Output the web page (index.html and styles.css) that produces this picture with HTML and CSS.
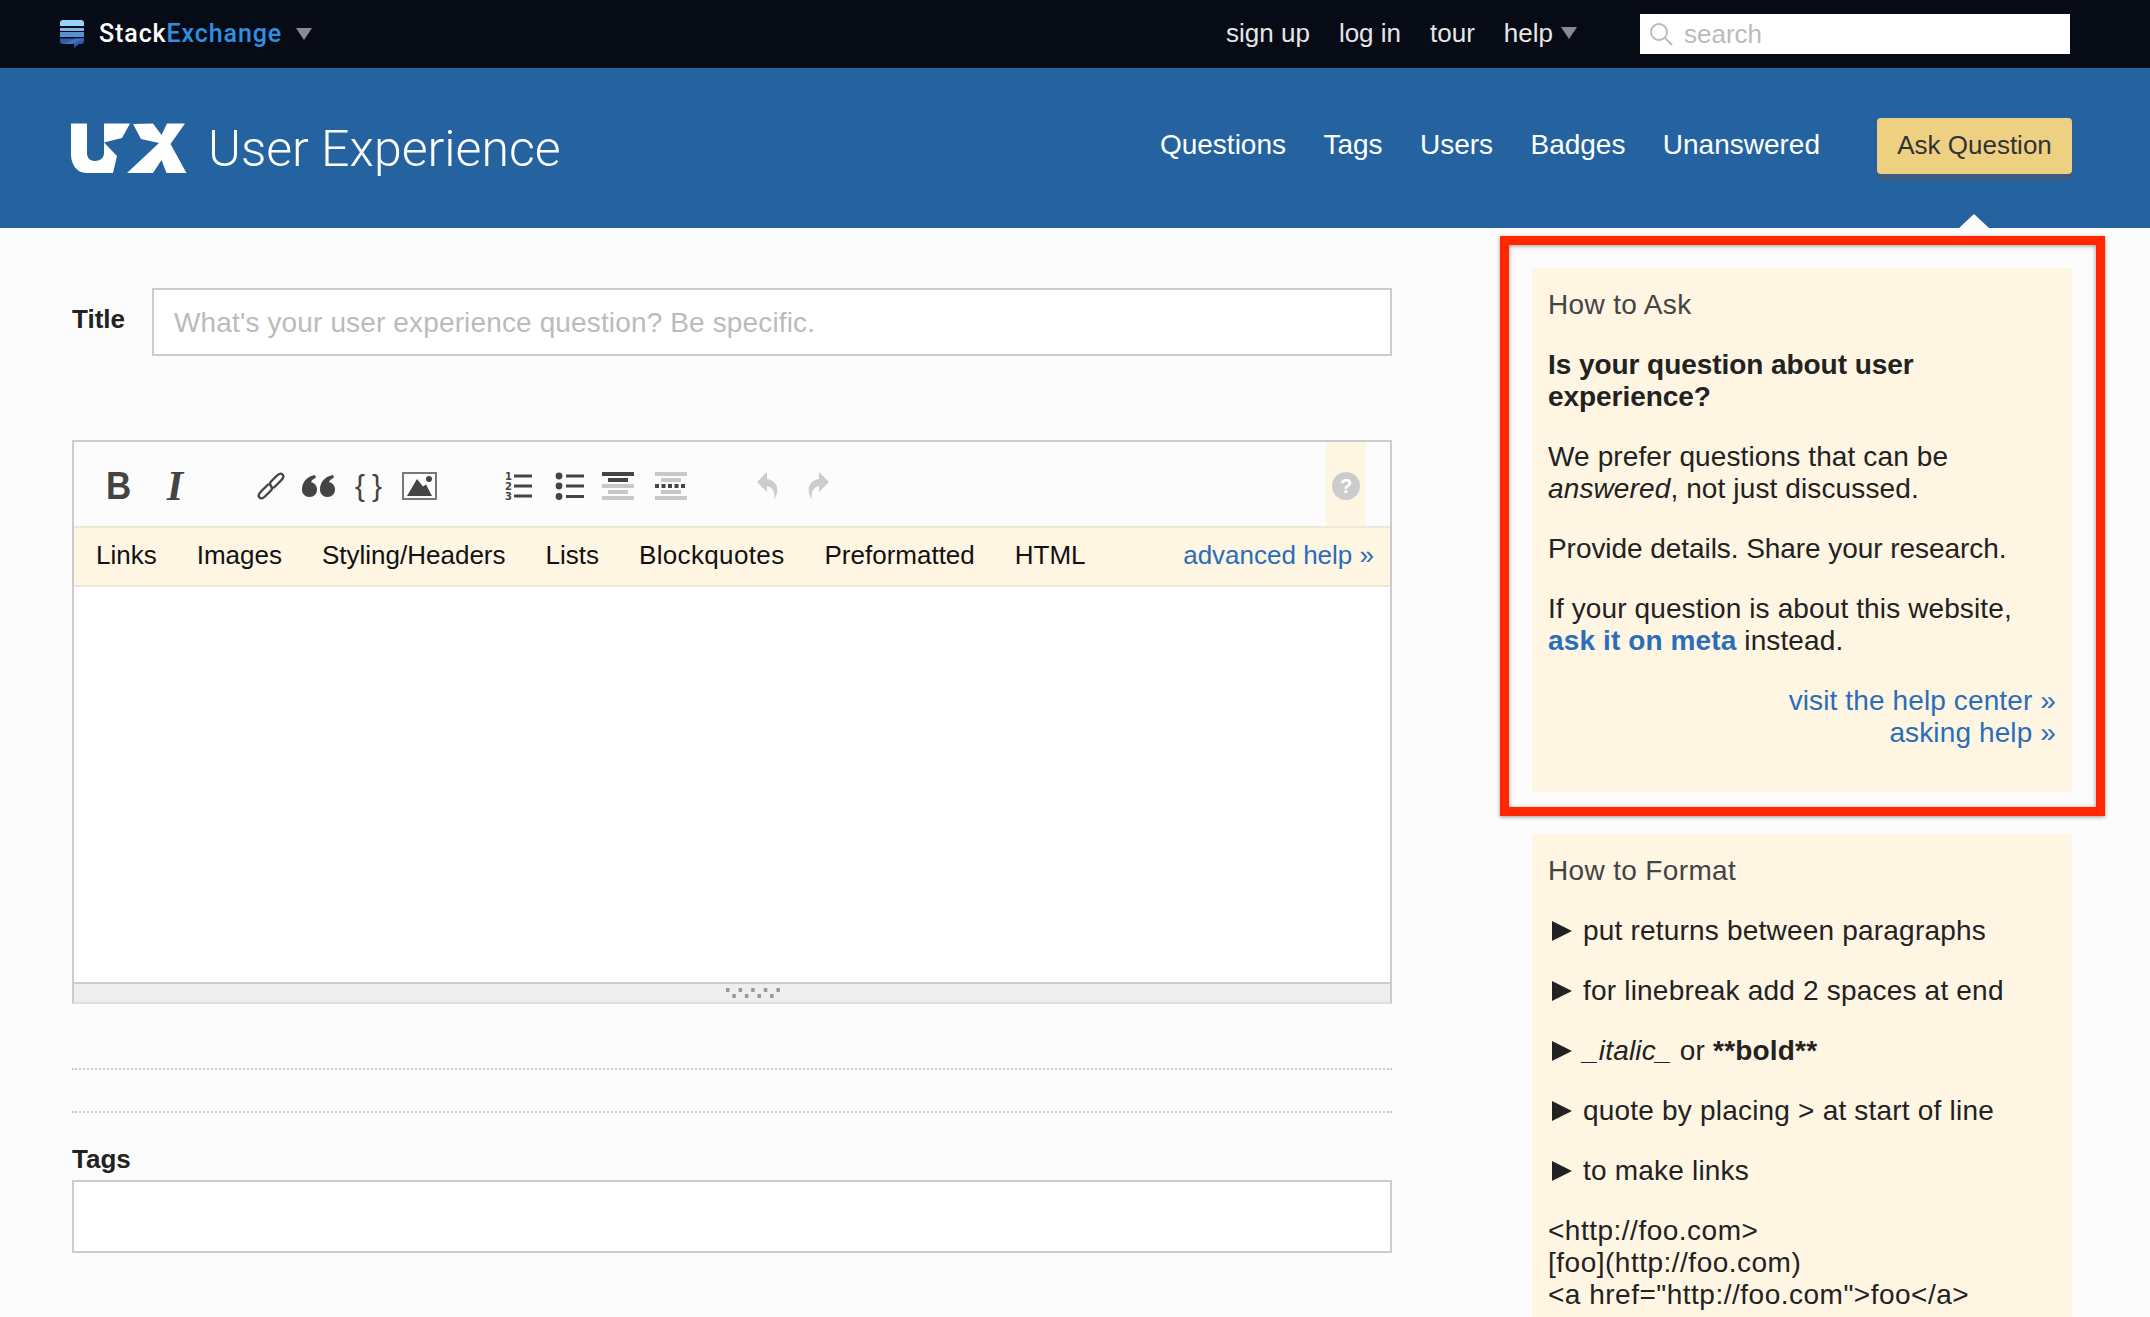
FILE: index.html
```html
<!DOCTYPE html>
<html>
  <head>
    <meta charset="utf-8">
    <title>Ask a Question - User Experience</title>
    <link rel="stylesheet" href="styles.css">
  </head>
  <body>
    <div class="topbar">
      <a class="network" href="#">
        <svg class="network-icon" width="24" height="28" viewBox="0 0 24 28">
          <path d="M0 3 Q0 0 3 0 H21 Q24 0 24 3 V6 H0 Z" fill="#96d4f7"/>
          <rect y="8" width="24" height="3" fill="#7fb4e4"/>
          <rect y="12" width="24" height="5" fill="#5b8fcf"/>
          <path d="M0 18.5 H24 V21 Q24 24 21 24 H19 L14 28 V24 H3 Q0 24 0 21 Z" fill="#2f5ca5"/>
          <path d="M4 24 L15 18.5 H24 V19 L12 24 Z" fill="#4272b8"/>
        </svg>
        <span class="network-name">Stack<span class="network-accent">Exchange</span></span>
        <span class="arrow-down"></span>
      </a>
      <div class="topbar-links">
        <a href="#">sign up</a>
        <a href="#">log in</a>
        <a href="#">tour</a>
        <a class="help-link" href="#">help<span class="arrow-down"></span></a>
      </div>
      <div class="search">
        <svg width="24" height="24" viewBox="0 0 24 24">
          <circle cx="10" cy="10" r="8" fill="none" stroke="#bbb" stroke-width="2"/>
          <path d="M16 16 L23 23" stroke="#bbb" stroke-width="2"/>
        </svg>
        <span class="search-text">search</span>
      </div>
    </div>

    <div class="header">
      <a class="brand" href="#">
        <svg width="118" height="50" viewBox="22 12 118 50">
          <path fill="#fff" d="M22 12.5 H38 V42 C38 47 41 50 46 50 C51 50 55 47 55 42 V12.5 H81 L73 27 L55 31.5 L68 45 L64 62 H37 C28 62 22 53 22 44 Z"/>
          <path fill="#fff" d="M84 13 L104 12.5 L112.5 24 L118 12.5 L136 12.5 L121.5 33 L137.5 62 L117.5 62 L112.5 49 L104 62 L78 62 L110 32 L92 28 Z"/>
        </svg>
        <span class="brand-name">User Experience</span>
      </a>
      <div class="nav">
        <a href="#">Questions</a>
        <a href="#">Tags</a>
        <a href="#">Users</a>
        <a href="#">Badges</a>
        <a href="#">Unanswered</a>
        <a class="ask-btn" href="#">Ask Question</a>
      </div>
    </div>

    <div class="content">
      <div class="main">
        <div class="title-row">
          <label class="field-label" for="title">Title</label>
          <input class="text-input" id="title" type="text" placeholder="What's your user experience question? Be specific.">
        </div>

        <div class="editor">
          <div class="toolbar">
            <div class="tool-group group-format">
              <span class="tool-bold">B</span>
              <span class="tool-italic">I</span>
            </div>
            <div class="tool-group group-insert">
              <svg class="tool-link" width="28" height="28" viewBox="0 0 28 28">
                <g fill="none" stroke="#444" stroke-width="2.4" stroke-linecap="round">
                  <path d="M12.5 11 L7 6.5 M4 9.5 L10 15.5" transform="translate(0 0)" stroke-opacity="0"/>
                  <path d="M11 12.5 L4 19.5 C1 22.5 1 24 2.5 25.5 C4 27 5.5 27 8.5 24 L13.5 19 C15.5 17 15.5 15.5 14 14"/>
                  <path d="M17 15.5 L24 8.5 C27 5.5 27 4 25.5 2.5 C24 1 22.5 1 19.5 4 L14.5 9 C12.5 11 12.5 12.5 14 14"/>
                </g>
              </svg>
              <svg width="33" height="22" viewBox="0 0 33 22">
                <path fill="#444" d="M0 14.5 C0 7 5 1.5 13 0 L14 2.5 C11 4 9.5 5.5 9 7.2 C12.5 7.8 15 10.5 15 14.5 C15 18.6 12 22 7.5 22 C3 22 0 18.6 0 14.5 Z"/>
                <path fill="#444" transform="translate(18 0)" d="M0 14.5 C0 7 5 1.5 13 0 L14 2.5 C11 4 9.5 5.5 9 7.2 C12.5 7.8 15 10.5 15 14.5 C15 18.6 12 22 7.5 22 C3 22 0 18.6 0 14.5 Z"/>
              </svg>
              <span class="tool-braces">{}</span>
              <svg width="35" height="28" viewBox="0 0 35 28">
                <rect x="1" y="1" width="33" height="26" fill="#fcfcfc" stroke="#777" stroke-width="2"/>
                <path fill="#444" d="M5 24 L15 7 L21 14.5 L24 12.5 L30 24 Z"/>
                <circle cx="27" cy="7" r="3" fill="#444"/>
              </svg>
            </div>
            <div class="tool-group group-blocks">
              <svg width="27" height="28" viewBox="0 0 27 28">
                <text class="ol-digit" x="0" y="8">1</text>
                <text class="ol-digit" x="0" y="18">2</text>
                <text class="ol-digit" x="0" y="28">3</text>
                <path stroke="#444" stroke-width="3" d="M9 4 H27 M9 14 H27 M9 24 H27"/>
              </svg>
              <svg class="tool-ul" width="29" height="28" viewBox="0 0 29 28">
                <circle cx="4" cy="4" r="3.4" fill="#444"/>
                <circle cx="4" cy="14" r="3.4" fill="#444"/>
                <circle cx="4" cy="24.5" r="3.4" fill="#444"/>
                <path stroke="#444" stroke-width="3" d="M11 4 H29 M11 14 H29 M11 24.5 H29"/>
              </svg>
              <svg width="32" height="28" viewBox="0 0 32 28">
                <rect width="32" height="4" fill="#444"/>
                <rect x="6" y="6" width="20" height="4" fill="#444"/>
                <rect y="12" width="32" height="4" fill="#c8c8c8"/>
                <rect x="6" y="18" width="20" height="4" fill="#c8c8c8"/>
                <rect y="24" width="32" height="4" fill="#c8c8c8"/>
              </svg>
              <svg width="32" height="28" viewBox="0 0 32 28">
                <rect width="32" height="4" fill="#c8c8c8"/>
                <rect x="6" y="6" width="20" height="4" fill="#c8c8c8"/>
                <path stroke="#444" stroke-width="4" stroke-dasharray="4 2.5" d="M0 14 H32"/>
                <rect x="6" y="18" width="20" height="4" fill="#c8c8c8"/>
                <rect y="24" width="32" height="4" fill="#c8c8c8"/>
              </svg>
            </div>
            <div class="tool-group group-history">
              <svg width="22" height="28" viewBox="0 0 22 28">
                <path fill="#ccc" d="M0 10 L10 0 V7 C19 8 24 17 17 28 C19 20 15 15 10 14 V20 Z"/>
              </svg>
              <svg width="22" height="28" viewBox="0 0 22 28">
                <path fill="#ccc" transform="translate(22 0) scale(-1 1)" d="M0 10 L10 0 V7 C19 8 24 17 17 28 C19 20 15 15 10 14 V20 Z"/>
              </svg>
            </div>
            <div class="tool-help"><span class="help-circle">?</span></div>
          </div>
          <div class="help-tabs">
            <a href="#">Links</a>
            <a href="#">Images</a>
            <a href="#">Styling/Headers</a>
            <a href="#">Lists</a>
            <a class="wide-tab" href="#">Blockquotes</a>
            <a href="#">Preformatted</a>
            <a href="#">HTML</a>
            <a class="advanced" href="#">advanced help »</a>
          </div>
          <div class="edit-area"></div>
          <div class="grip">
            <svg width="54" height="10" viewBox="0 0 54 10">
              <g fill="#999">
                <rect x="0" width="3.5" height="4"/>
                <rect x="12.6" width="3.5" height="4"/>
                <rect x="25.2" width="3.5" height="4"/>
                <rect x="37.8" width="3.5" height="4"/>
                <rect x="50.4" width="3.5" height="4"/>
                <rect x="6.3" y="6" width="3.5" height="4"/>
                <rect x="18.9" y="6" width="3.5" height="4"/>
                <rect x="31.5" y="6" width="3.5" height="4"/>
                <rect x="44.1" y="6" width="3.5" height="4"/>
              </g>
            </svg>
          </div>
        </div>

        <div class="dotted first"></div>
        <div class="dotted second"></div>

        <label class="field-label tags-label" for="tags">Tags</label>
        <input class="text-input tags-input" id="tags" type="text">
      </div>

      <div class="sidebar">
        <div class="card callout">
          <p class="card-title">How to Ask</p>
          <p class="lead"><b>Is your question about user experience?</b></p>
          <p>We prefer questions that can be <i>answered</i>, not just discussed.</p>
          <p class="lead">Provide details. Share your research.</p>
          <p>If your question is about this website, <a href="#"><b>ask it on meta</b></a> instead.</p>
          <p class="card-links"><a href="#">visit the help center »</a><br><a href="#">asking help »</a></p>
        </div>
        <div class="card card-format">
          <p class="card-title">How to Format</p>
          <p class="tip">put returns between paragraphs</p>
          <p class="tip">for linebreak add 2 spaces at end</p>
          <p class="tip"><span><i>_italic_</i> or <b>**bold**</b></span></p>
          <p class="tip">quote by placing &gt; at start of line</p>
          <p class="tip">to make links</p>
          <p class="samples">&lt;http://foo.com&gt;<br>[foo](http://foo.com)<br>&lt;a href="http://foo.com"&gt;foo&lt;/a&gt;</p>
        </div>
      </div>
    </div>
  </body>
</html>
```

FILE: styles.css
```css
html {
  overflow: hidden;
}
body {
  margin: 0;
  height: 1317px;
  overflow: hidden;
  background-color: #fcfcfc;
  color: #222;
  font-family: "Liberation Sans", Arial, sans-serif;
  font-size: 28px;
  line-height: 32px;
}
a {
  color: #2a6db8;
  text-decoration: none;
}
p {
  margin: 0 0 28px;
}

/* top bar */
.topbar {
  display: flex;
  align-items: center;
  height: 68px;
  padding: 0 80px 0 60px;
  background-color: #060b15;
}
.network {
  display: flex;
  align-items: center;
  margin-right: auto;
}
.network-name {
  margin: 0 14px 0 15px;
  color: #fff;
  font-family: Roboto, sans-serif;
  font-size: 25px;
  font-weight: 500;
  letter-spacing: 0.9px;
}
.network-accent {
  color: #2f8fe0;
}
.arrow-down {
  display: inline-block;
  border-top: 12px solid #8a8a8a;
  border-left: 8px solid transparent;
  border-right: 8px solid transparent;
}
.topbar-links {
  display: flex;
  align-items: center;
  gap: 29px;
  margin-right: 63px;
  padding-bottom: 2px;
}
.topbar-links a {
  color: #e6e6e6;
  font-size: 26px;
}
.help-link {
  display: flex;
  align-items: center;
}
.help-link .arrow-down {
  margin-left: 8px;
}
.search {
  display: flex;
  align-items: center;
  width: 430px;
  height: 40px;
  box-sizing: border-box;
  padding-left: 9px;
  background-color: #fff;
}
.search-text {
  margin-left: 11px;
  color: #bbb;
  font-size: 26px;
}

/* site header */
.header {
  display: flex;
  align-items: center;
  justify-content: space-between;
  height: 160px;
  padding: 0 78px 0 71px;
  background-color: #24639f;
}
.brand {
  display: flex;
  align-items: center;
  gap: 19px;
}
.brand-name {
  margin-top: 2px;
  color: #fff;
  font-family: Roboto, sans-serif;
  font-size: 50px;
  font-weight: 300;
  line-height: 56px;
}
.nav {
  display: flex;
  align-items: center;
  gap: 37.4px;
  margin-bottom: 4px;
}
.nav a {
  padding-bottom: 3px;
  color: #fff;
  font-size: 28px;
}
.nav .ask-btn {
  position: relative;
  margin-left: 19.6px;
  width: 195px;
  height: 56px;
  padding: 0;
  box-sizing: border-box;
  background-color: #eed083;
  border-radius: 4px;
  box-shadow: 0 6px 0 #3d5a80;
  color: #333;
  font-size: 26px;
  line-height: 54px;
  text-align: center;
}
.ask-btn::after {
  content: "";
  position: absolute;
  top: 96px;
  left: 82px;
  border-bottom: 14px solid #fcfcfc;
  border-left: 15px solid transparent;
  border-right: 15px solid transparent;
}

/* page columns */
.content {
  display: flex;
  justify-content: space-between;
  padding: 0 78px 0 72px;
}
.main {
  width: 1320px;
  padding-top: 60px;
}
.sidebar {
  width: 540px;
  padding-top: 40px;
}

/* form */
.title-row {
  display: flex;
  align-items: center;
  justify-content: space-between;
}
.field-label {
  color: #222;
  font-size: 26px;
  font-weight: bold;
}
.text-input {
  display: block;
  box-sizing: border-box;
  width: 1240px;
  height: 68px;
  padding: 2px 20px 0;
  background-color: #fff;
  border: 2px solid #ccc;
  border-radius: 0;
  outline: none;
  font-family: "Liberation Sans", Arial, sans-serif;
  font-size: 28px;
  letter-spacing: 0.14px;
}
.text-input::placeholder {
  color: #bbb;
  opacity: 1;
}
.title-row .field-label {
  margin-top: -6px;
}
.tags-label {
  display: block;
  margin-top: 30px;
}
.tags-input {
  width: 1320px;
  height: 73px;
  margin-top: 5px;
}

/* editor */
.editor {
  margin-top: 84px;
  border: 2px solid #ccc;
  border-bottom: 2px solid #ddd;
}
.toolbar {
  display: flex;
  align-items: center;
  height: 80px;
  padding: 4px 24px 0 34px;
}
.tool-group {
  display: flex;
  align-items: center;
  margin-right: 70px;
}
.group-format {
  gap: 35px;
}
.group-insert {
  gap: 20px;
}
.group-blocks {
  gap: 21px;
  margin-left: -2px;
}
.group-history {
  gap: 28px;
}
.tool-link {
  margin-right: -3px;
}
.tool-ul {
  margin: 0 -3px 0 2px;
}
.tool-bold {
  width: 20px;
  color: #444;
  font-size: 38px;
  font-weight: bold;
  line-height: 38px;
  transform: scaleX(0.92);
  transform-origin: left;
  margin-left: -2px;
  margin-right: 2px;
}
.tool-italic {
  width: 24px;
  color: #444;
  font-family: "Liberation Serif", serif;
  font-size: 42px;
  font-style: italic;
  font-weight: bold;
  line-height: 42px;
  text-align: center;
}
.tool-braces {
  width: 27px;
  color: #444;
  font-size: 30px;
  line-height: 36px;
  margin: -4px 0;
  letter-spacing: 7px;
}
.ol-digit {
  fill: #444;
  font-family: "DejaVu Sans", sans-serif;
  font-size: 10px;
  font-weight: bold;
}
.tool-help {
  display: flex;
  align-items: center;
  justify-content: center;
  align-self: stretch;
  width: 40px;
  margin: -4px 0 0 auto;
  padding-top: 4px;
  background-color: #fff5e3;
}
.help-circle {
  width: 28px;
  height: 28px;
  border-radius: 50%;
  background-color: #ccc;
  color: #fff;
  font-size: 20px;
  font-weight: bold;
  line-height: 28px;
  text-align: center;
}
.help-tabs {
  display: flex;
  align-items: center;
  gap: 40px;
  height: 54px;
  padding: 0 16px 3px 22px;
  background-color: #fff5e3;
  border-top: 2px solid #efe8d8;
  border-bottom: 2px solid #efe8d8;
}
.help-tabs a {
  color: #111;
  font-size: 26px;
}
.help-tabs .wide-tab {
  letter-spacing: 0.35px;
}
.help-tabs .advanced {
  margin-left: auto;
  color: #2a6db8;
}
.edit-area {
  height: 395px;
  background-color: #fff;
}
.grip {
  display: flex;
  justify-content: center;
  align-items: center;
  height: 18px;
  padding-left: 42px;
  background-color: #eee;
  border-top: 2px solid #ccc;
}
.dotted {
  border-top: 2px dotted #ccc;
}
.dotted.first {
  margin-top: 64px;
}
.dotted.second {
  margin-top: 41px;
}

/* sidebar cards */
.card {
  padding: 21px 16px 16px;
  background-color: #fff5e3;
  letter-spacing: 0.12px;
}
.card-title {
  color: #444;
  letter-spacing: 0.35px;
}
.card-links {
  text-align: right;
}
.lead {
  letter-spacing: -0.06px;
}
.callout {
  position: relative;
  height: 524px;
  box-sizing: border-box;
  margin-bottom: 42px;
}
.callout::after {
  content: "";
  position: absolute;
  top: -32px;
  left: -32px;
  right: -33px;
  bottom: -24px;
  border: 9px solid #ff2600;
  box-shadow: 0 1px 4px rgba(0, 0, 0, 0.4), inset 0 1px 4px rgba(0, 0, 0, 0.4);
  pointer-events: none;
}
.card-format {
  height: 500px;
}
.tip {
  display: flex;
  align-items: center;
  letter-spacing: 0.2px;
}
.tip::before {
  content: "";
  flex-shrink: 0;
  margin: 0 11px 0 4px;
  border-left: 20px solid #222;
  border-top: 10px solid transparent;
  border-bottom: 10px solid transparent;
}
.samples {
  letter-spacing: 0.5px;
}
```
